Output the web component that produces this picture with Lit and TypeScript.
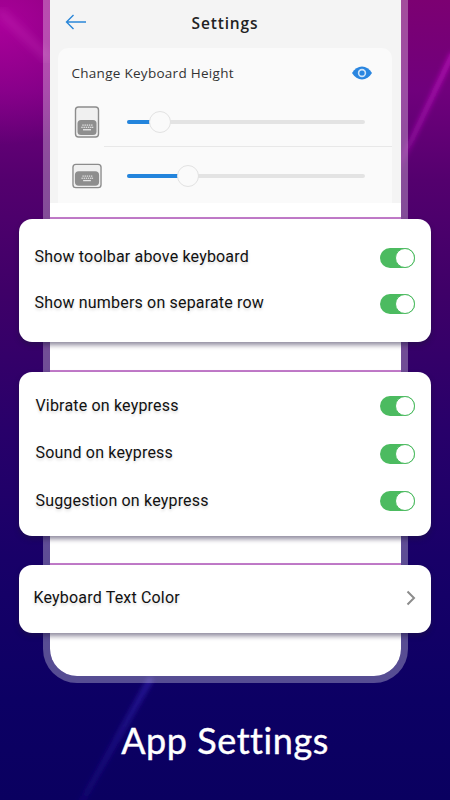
import { LitElement, html, css, svg } from "lit";
import { customElement } from "lit/decorators.js";

const toggle = () => html`<span class="toggle"><span class="knob"></span></span>`;

@customElement("app-root")
export class AppRoot extends LitElement {
  static styles = css`
    :host { display: block; width: 450px; height: 800px; overflow: hidden; font-family: Roboto, sans-serif; }
    .stage {
      position: relative;
      width: 450px; height: 800px; display: flex; flex-direction: column; align-items: center;
      background:
        radial-gradient(ellipse 150px 120px at 0 25px, rgba(190,0,170,.7), transparent),
        linear-gradient(180deg, #7c0072 0, #70007c 90px, #54006e 180px, #3f0068 290px, #28006a 430px, #180068 560px, #0c0064 700px, #0a0060 800px);
    }
    .streaks { position: absolute; inset: 0; width: 450px; height: 800px; display: block; }
    .phone {
      position: relative;
      width: 365px; height: 683px; box-sizing: border-box; flex: none; display: flex; flex-direction: column;
      border: solid rgba(255,255,255,.3); border-width: 0 7px 7px; border-radius: 0 0 34px 34px;
    }
    .screen { flex: 1; display: flex; flex-direction: column; background: #fff; border-radius: 0 0 27px 27px; }
    .top { background: #f4f4f4; height: 203px; margin-bottom: 15px; flex: none; box-sizing: border-box; }
    .bar { height: 48px; display: flex; align-items: center; position: relative; padding-left: 15px; }
    .bar svg { display: block; margin-top: -4px; }
    .bar h1 {
      position: absolute; inset: 0; margin: 0; display: flex; align-items: center; justify-content: center;
      padding-bottom: 3px; font: 600 15.5px "Open Sans", sans-serif; letter-spacing: .85px; color: #222; pointer-events: none;
    }
    .panel { margin: 0 9px 0 8px; height: 155px; background: #fafafa; border-radius: 10px 10px 0 0; box-sizing: border-box; }
    .phead {
      height: 49px; display: flex; justify-content: space-between; align-items: center; padding: 0 20px 0 14px;
      font: 400 13.5px "Open Sans", sans-serif; letter-spacing: .28px; color: #333;
    }
    .srow { display: flex; align-items: center; height: 49px; position: relative; }
    .srow.second { height: 57px; border-top: 1px solid #e8e8e8; margin-left: 46px; }
    .srow.second .ico { margin-left: -32px; }
    .srow.second .slider { margin-left: 25px; }
    .ico { width: 30px; margin-left: 14px; display: flex; justify-content: center; flex: none; }
    .slider { width: 238px; height: 4px; margin-left: 25px; background: #e3e3e3; border-radius: 2px; position: relative; flex: none; }
    .fill { height: 100%; background: #2384dc; border-radius: 2px; }
    .thumb {
      position: absolute; top: -9px; width: 22px; height: 22px; margin-left: -11px; box-sizing: border-box;
      border-radius: 50%; background: #fafafa; border: 1px solid #e2e2e2;
    }
    .sec { border-top: 2px solid #c47ccb; margin-top: -1px; flex: none; }
    .card {
      margin: 0 -30px 0 -31px; background: #fff; border-radius: 13px; padding: 0 16px;
      box-shadow: 0 3px 5px rgba(30,20,60,.5);
      position: relative;
    }
    .c1 { padding-top: 15px; padding-bottom: 16px; margin-bottom: 29px; }
    .c2 { padding-top: 9.500px; padding-bottom: 12px; margin-bottom: 28px; }
    .row {
      display: flex; justify-content: space-between; align-items: center;
      font: 400 16px Roboto, sans-serif; letter-spacing: .18px; color: #111; text-shadow: 0 2px 3px rgba(0,0,0,.15);
    }
    .c1 .row { height: 46px; }
    .c1 .row > span:first-child { margin-bottom: 2px; }
    .c2 .row { height: 47.500px; }
    .c3 .row { height: 68px; }
    .c3 .row > span:first-child { margin: 0 0 4px -1px; }
    .c2 .row > span:first-child { margin-left: 1px; }
    .toggle { width: 35px; height: 20px; border-radius: 10px; background: #4cbb60; position: relative; flex: none; margin-top: 2px; display: block; }
    .knob {
      position: absolute; right: 0; top: 0; width: 20px; height: 20px; box-sizing: border-box;
      border-radius: 50%; background: #fff; border: 1px solid #4cbb60; display: block;
    }
    .chev { display: block; margin-top: -2px; margin-right: -1px; }
    .title {
      position: relative;
      flex: 1; display: flex; align-items: center; justify-content: center; padding-bottom: 4px; color: #fff;
      font: 400 36px Lato, sans-serif; letter-spacing: .55px; width: 100%; -webkit-text-stroke: .4px #fff;
    }
  `;

  private portrait() {
    return html`<svg width="26" height="32" viewBox="0 0 26 32" fill="none">
      <rect x="1.5" y="1" width="23" height="30" rx="3" fill="#f0f0f0" stroke="#8c8c8c" stroke-width="1.4"/>
      <rect x="3.5" y="14" width="19" height="15" rx="3.5" fill="#8e8e8e"/>
      ${this.keys(13, 18.5)}
    </svg>`;
  }
  private landscape() {
    return html`<svg width="31" height="26" viewBox="0 0 31 26" fill="none">
      <rect x="1" y="1" width="29" height="24" rx="3" fill="#f0f0f0" stroke="#8c8c8c" stroke-width="1.4"/>
      <rect x="3" y="8" width="25" height="15" rx="4" fill="#8e8e8e"/>
      ${this.keys(15.5, 12.5)}
    </svg>`;
  }
  private keys(cx: number, y: number) {
    return svg`<g fill="#e6e6e6">
      ${[-4.5, -2.3, -0.1, 2.1, 4.3].map((d) => svg`<rect x=${cx + d - 0.2} y=${y} width="1.4" height="1.2"/>`)}
      ${[-5.5, -3.3, -1.1, 1.1, 3.3, 5.1].map((d) => svg`<rect x=${cx + d - 0.2} y=${y + 2.2} width="1.4" height="1.2"/>`)}
      <rect x=${cx - 4} y=${y + 4.6} width="8" height="1.3"/>
    </g>`;
  }
  private slider(pct: number) {
    return html`<div class="slider">
      <div class="fill" style="width:${pct}%"></div>
      <div class="thumb" style="left:${pct}%"></div>
    </div>`;
  }

  render() {
    return html`<div class="stage">
      <svg class="streaks" viewBox="0 0 450 800" fill="none" stroke-linecap="round">
        <defs>
          <filter id="b2"><feGaussianBlur stdDeviation="2.500"/></filter>
          <filter id="b4"><feGaussianBlur stdDeviation="5"/></filter>
          <linearGradient id="r" gradientUnits="userSpaceOnUse" x1="452" y1="55" x2="395" y2="175">
            <stop offset="0" stop-color="#c010c0" stop-opacity=".85"/>
            <stop offset=".7" stop-color="#b010b8" stop-opacity=".6"/>
            <stop offset="1" stop-color="#b010b8" stop-opacity="0"/>
          </linearGradient>
          <linearGradient id="d" gradientUnits="userSpaceOnUse" x1="150" y1="680" x2="80" y2="805">
            <stop offset="0" stop-color="#3a28c0" stop-opacity=".55"/>
            <stop offset="1" stop-color="#2a18a0" stop-opacity=".2"/>
          </linearGradient>
        </defs>
        <path d="M452 55 395 175" stroke="url(#r)" stroke-width="5" filter="url(#b2)"/>
        <path d="M0 12 48 58" stroke="#e050d0" stroke-opacity=".3" stroke-width="6" filter="url(#b4)"/>
        <path d="M150 680 80 805" stroke="url(#d)" stroke-width="6" filter="url(#b2)"/>
      </svg>
      <div class="phone"><div class="screen">
        <div class="top">
          <div class="bar">
            <svg width="22" height="16" viewBox="0 0 22 16" fill="none" stroke="#2a86d8" stroke-width="1.4">
              <path d="M21 8H1.500M8.500 1 1.500 8l7 7"/>
            </svg>
            <h1>Settings</h1>
          </div>
          <div class="panel">
            <div class="phead">
              <span>Change Keyboard Height</span>
              <svg width="20" height="14" viewBox="0 0 20 14">
                <path d="M0 7C2.500 2.800 6 .5 10 .5S17.500 2.800 20 7c-2.500 4.200-6 6.500-10 6.500S2.500 11.200 0 7Z" fill="#2a86e0"/>
                <circle cx="10" cy="7" r="4.200" fill="#cfe4f8"/>
                <circle cx="10" cy="7" r="2.600" fill="#2a86e0"/>
              </svg>
            </div>
            <div class="srow"><div class="ico">${this.portrait()}</div>${this.slider(14)}</div>
            <div class="srow second"><div class="ico">${this.landscape()}</div>${this.slider(26)}</div>
          </div>
        </div>
        <div class="sec"><div class="card c1">
          <div class="row"><span>Show toolbar above keyboard</span>${toggle()}</div>
          <div class="row"><span>Show numbers on separate row</span>${toggle()}</div>
        </div></div>
        <div class="sec"><div class="card c2">
          <div class="row"><span>Vibrate on keypress</span>${toggle()}</div>
          <div class="row"><span>Sound on keypress</span>${toggle()}</div>
          <div class="row"><span>Suggestion on keypress</span>${toggle()}</div>
        </div></div>
        <div class="sec"><div class="card c3">
          <div class="row"><span>Keyboard Text Color</span>
            <svg class="chev" width="10" height="16" viewBox="0 0 10 16" fill="none" stroke="#8c8c8c" stroke-width="2"><path d="M1.500 1.500 8 8l-6.500 6.500"/></svg>
          </div>
        </div></div>
      </div></div>
      <div class="title">App Settings</div>
    </div>`;
  }
}
